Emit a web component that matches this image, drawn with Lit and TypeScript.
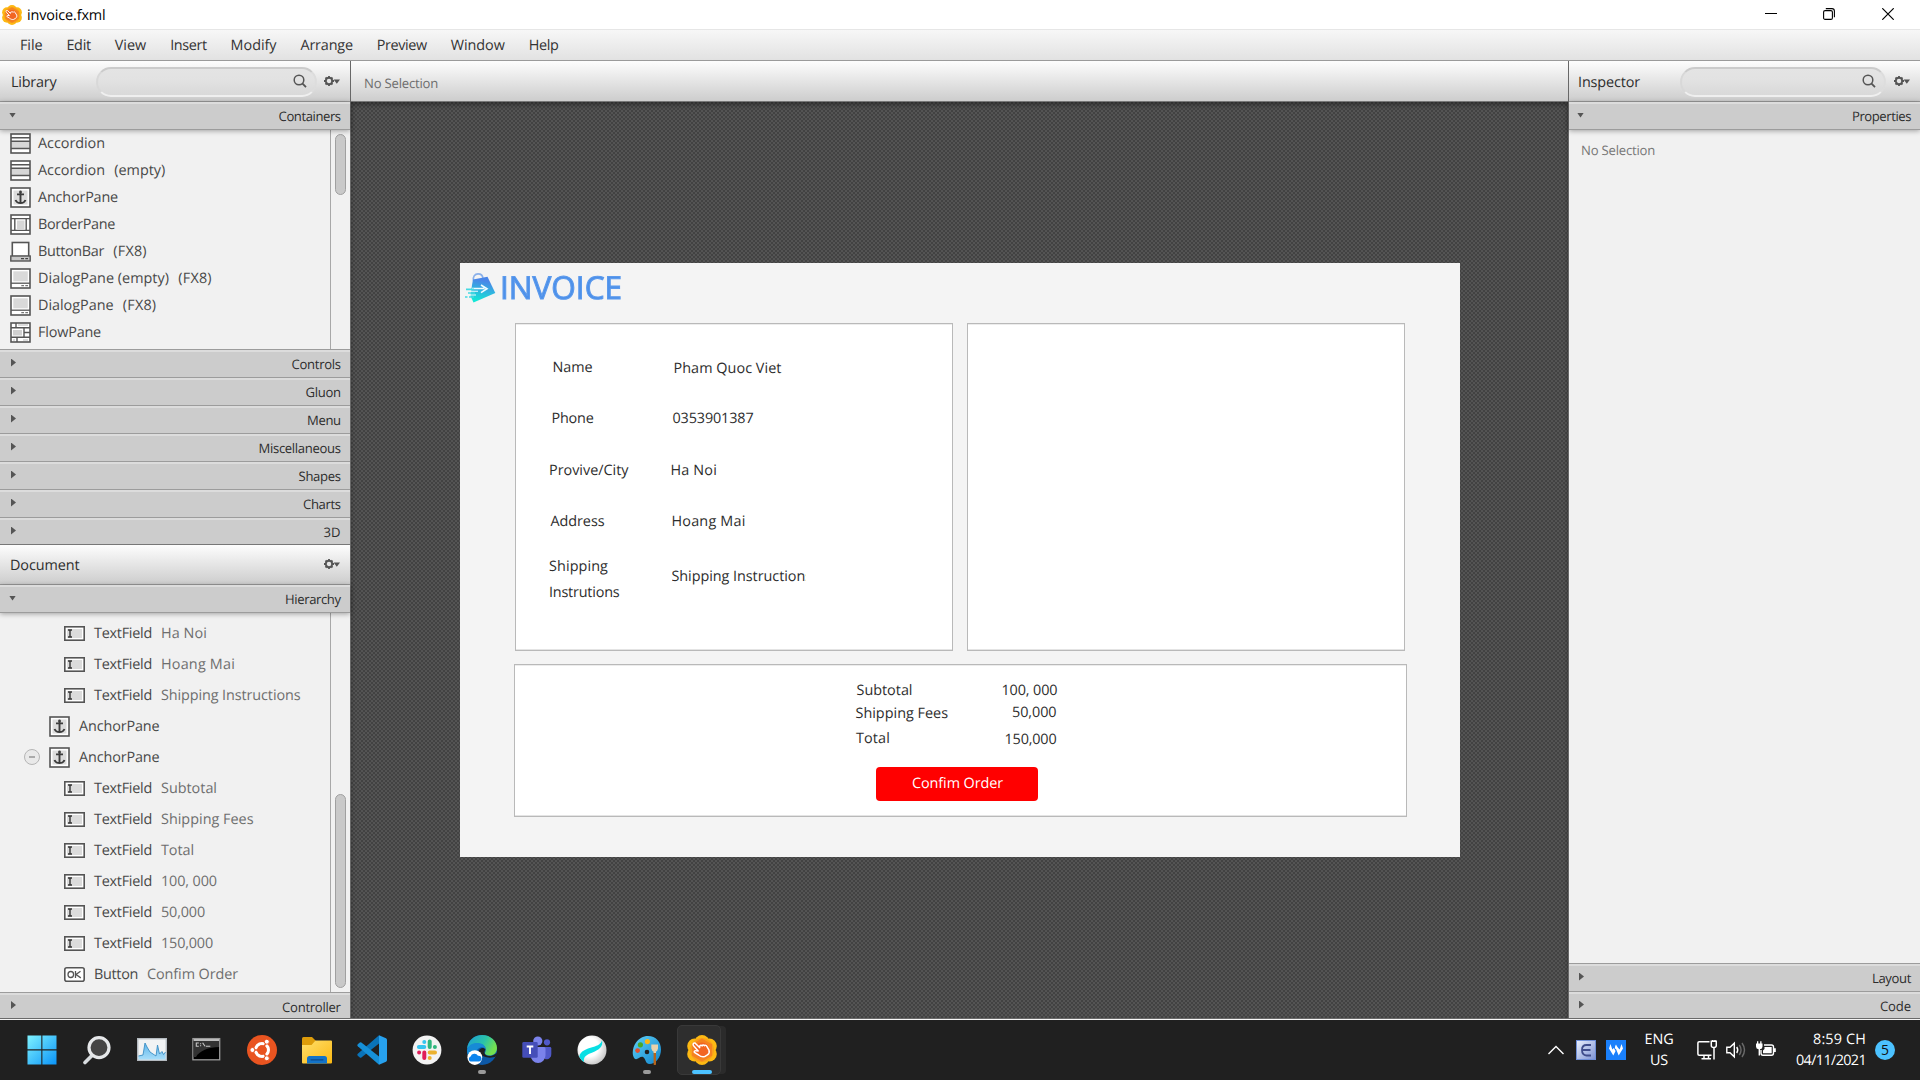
import { LitElement, html, svg, css, nothing } from "lit";
import { customElement, property } from "lit/decorators.js";

/** One line of text whose tracking is adjusted so that it spans a given width. */
@customElement("fit-text")
class FitText extends LitElement {
  @property() text = "";
  @property({ type: Number }) w = 0;
  static styles = css`
    :host { display: inline-block; flex: none; white-space: pre; }
    .t { display: inline-block; text-rendering: geometricPrecision; }
  `;
  updated() {
    const el = this.renderRoot.querySelector(".t") as HTMLElement;
    el.style.letterSpacing = "0px";
    const natural = el.getBoundingClientRect().width;
    if (this.w && this.text.length)
      el.style.letterSpacing = `${(this.w - natural) / this.text.length}px`;
  }
  render() {
    return html`<span class="t">${this.text}</span>`;
  }
}

const t = (text: string, w: number, cls = "") =>
  html`<fit-text class=${cls} .text=${text} .w=${w}></fit-text>`;

/* ---------- component glyphs (21 x 21) ---------- */
const frame = svg`<rect x="1" y="1" width="19" height="19" fill="#fff" stroke="#555" stroke-width="1.6"/>`;
const glyphs: Record<string, unknown> = {
  accordion: svg`${frame}<rect x="2" y="8.5" width="17" height="6.5" fill="#d6d6d6"/>
    <path d="M1 4.7H20M1 8.3H20M1 15.6H20" stroke="#555" stroke-width="1.5"/>`,
  anchor: svg`${frame}<rect x="3.5" y="3.5" width="14" height="14" fill="#dcdcdc"/>
    <path d="M10.5 4.5V16M7 7.4H14M5.5 13C6.3 15 8 16.1 10.5 16.1S14.7 15 15.5 13" fill="none" stroke="#3c3c3c" stroke-width="1.9"/>
    <circle cx="10.5" cy="4.9" r="1.3" fill="#3c3c3c"/>`,
  border: svg`${frame}<rect x="7" y="6.5" width="7.5" height="8.5" fill="#d6d6d6"/>
    <path d="M1 4.6H20M1 16.4H20M4.8 4.6V16.4M16.2 4.6V16.4" stroke="#555" stroke-width="1.4"/>`,
  buttonbar: svg`<rect x="2.3" y="1.5" width="16.4" height="14" fill="#fff" stroke="#555" stroke-width="1.6"/>
    <rect x=".8" y="15" width="19.4" height="5" fill="#c6c6c6" stroke="#555" stroke-width="1.4"/>
    <path d="M11 17.6H14M15.3 17.6H18" stroke="#444" stroke-width="1.4"/>`,
  dialog: svg`${frame}<rect x="3.3" y="3.3" width="14.5" height="10" fill="#d9d9d9"/>
    <path d="M1 15.2H20" stroke="#555" stroke-width="1.3"/><path d="M11.3 17.7H14M15.3 17.7H18" stroke="#777" stroke-width="1.2"/>`,
  flow: svg`${frame}<rect x="3" y="8" width="9" height="5.5" fill="#d0d0d0"/><path d="M8 3H18M3 18H5M13 18H18" stroke="#d0d0d0" stroke-width="1.5"/>
    <path d="M1 5.8H20M1 15.2H20M6 1V5.8M14 5.8V15.2M14 10.5H20M7 15.2V20" stroke="#555" stroke-width="1.4" fill="none"/>`,
  textfield: svg`<rect x=".8" y="3.8" width="19.4" height="13.4" fill="#fff" stroke="#555" stroke-width="1.6"/>
    <rect x="3" y="6" width="15" height="9" fill="#dcdcdc"/>
    <path d="M4 7H8M4 14H8M6 7V14" stroke="#333" stroke-width="1.4"/>`,
  ok: svg`<rect x=".8" y="3.8" width="19.4" height="13.4" rx="2" fill="#fff" stroke="#555" stroke-width="1.6"/>
    <ellipse cx="6.8" cy="10.5" rx="2.8" ry="3" fill="none" stroke="#555" stroke-width="1.3"/>
    <path d="M11.5 7V14M16.5 7.2L12 10.5L16.8 13.9" fill="none" stroke="#555" stroke-width="1.3"/>`,
};
const glyph = (name: string) =>
  html`<svg class="glyph" width="21" height="21" viewBox="0 0 21 21">${glyphs[name]}</svg>`;

const gear = html`<svg class="gear" width="17" height="12" viewBox="0 0 17 12">
  <circle cx="5" cy="6" r="3.2" fill="none" stroke="#555" stroke-width="1.9"/>
  <path d="M5 .9V2.4M5 9.6V11.1M0 6H1.5M8.5 6H10M1.5 2.5L2.5 3.5M7.5 8.5L8.5 9.5M8.5 2.5L7.5 3.5M2.5 8.5L1.5 9.5" stroke="#555" stroke-width="1.8"/>
  <path d="M9.6 4.6H16L12.8 8.7Z" fill="#555"/></svg>`;
const magnifier = html`<svg width="14" height="14" viewBox="0 0 14 14"><circle cx="6" cy="6" r="4.8" fill="none" stroke="#555" stroke-width="1.5"/><path d="M9.3 9.4L13 13.2" stroke="#555" stroke-width="1.8"/></svg>`;

/* Flower badge of the application, used in the title bar and the taskbar. */
const builder = (s: number) => html`<svg width=${s} height=${s} viewBox="0 0 30 30">
  <g fill="#fdb913"><circle cx="15" cy="7.5" r="7.5"/><circle cx="15" cy="22.5" r="7.5"/><circle cx="7.7" cy="11" r="7.5"/><circle cx="22.3" cy="11" r="7.5"/><circle cx="7.7" cy="19" r="7.5"/><circle cx="22.3" cy="19" r="7.5"/></g>
  <circle cx="15" cy="15" r="12" fill="#f9a11b"/><path d="M15 3.5L25 9.2V20.8L15 26.5L5 20.8V9.2Z" fill="#f58220"/><circle cx="15" cy="15" r="7.5" fill="#f26522"/>
  <path d="M6.3 8.6C7 7.8 8.2 8 9 8.9L12.6 12.6L12.8 10.9C13.4 9.9 14.6 10 15.1 10.9C15.6 9.7 17 9.8 17.4 10.8C18.3 9.9 19.5 10.3 19.8 11.4L22 15.2C22.6 17 22 18.8 20.4 19.9L17.6 21.6C15.6 22.2 13.2 21.4 11.6 20L7.4 17.4C6.9 16.3 7.8 15.5 9 15.7L11.2 16L6.6 10.8C6 10 5.9 9.2 6.3 8.6Z" fill="#f26522" stroke="#fff" stroke-width="1.5" stroke-linejoin="round"/></svg>`;

/* ---------- taskbar icons (30 x 30) ---------- */
const apps = [
  { art: svg`<defs><linearGradient id="win" x1="0" y1="0" x2="1" y2="1"><stop offset="0" stop-color="#7ff3ff"/><stop offset="1" stop-color="#0a93f8"/></linearGradient></defs>
    <path d="M.5 .5H14.3V14.3H.5ZM15.4 .5H29.5V14.3H15.4ZM.5 15.4H14.3V29.5H.5ZM15.4 15.4H29.5V29.5H15.4Z" fill="url(#win)"/>` },
  { art: svg`<path d="M3 27.5L10 20.5" stroke="#d9dde0" stroke-width="3.6" stroke-linecap="round"/><circle cx="17" cy="12.6" r="10" fill="#454545" stroke="#e6e8ea" stroke-width="3.2"/>` },
  { art: svg`<defs><linearGradient id="mon" x1="0" y1="0" x2="0" y2="1"><stop offset="0" stop-color="#5db4ea"/><stop offset="1" stop-color="#a8defa"/></linearGradient></defs>
    <rect x=".7" y="3.7" width="28.6" height="21.6" fill="#f1f3f4" stroke="#b4bac0" stroke-width="1.4"/>
    <path d="M1.5 21L6 20L8 8L10 12L13 17L16 19L19 21L20.5 10L22.5 19L25 16.5L26.5 19.5L28.5 17V24.6H1.5Z" fill="url(#mon)"/><path d="M1.5 21L6 20L8 8L10 12L13 17L16 19L19 21L20.5 10L22.5 19L25 16.5L26.5 19.5L28.5 17" fill="none" stroke="#3c8fc4" stroke-width=".9"/>` },
  { art: svg`<rect x=".9" y="3.6" width="26.8" height="21.2" fill="#000" stroke="#9a9a9a" stroke-width="1.3"/><path d="M1.6 5H27V12C17 12 7 16 4 22H1.6Z" fill="#333"/><path d="M1.6 5H27" stroke="#ccc" stroke-width="1.8"/>
    <path d="M6.8 8H4.3V11.3H6.8M8.6 8.2V9.2M8.6 10.2V11.3M10.6 7.7L13 11.3M13.8 11.3H18.3" stroke="#c8c8c8" stroke-width="1.1" fill="none"/>` },
  { art: svg`<circle cx="15" cy="15" r="15" fill="#e95420"/><circle cx="15" cy="15" r="6.4" fill="none" stroke="#fff" stroke-width="3.2"/>
    <path d="M15 15L3 15M15 15L21 4.6M15 15L21 25.4" stroke="#e95420" stroke-width="1.5"/><circle cx="15" cy="15" r="4.7" fill="#e95420"/>
    <g fill="#fff" stroke="#e95420" stroke-width="1"><circle cx="5.4" cy="15" r="2.5"/><circle cx="19.8" cy="6.7" r="2.5"/><circle cx="19.8" cy="23.3" r="2.5"/></g>` },
  { art: svg`<defs><linearGradient id="fol" x1="0" y1="0" x2="1" y2="1"><stop offset="0" stop-color="#ffdf6b"/><stop offset="1" stop-color="#fcb913"/></linearGradient></defs>
    <path d="M0 3.5Q0 2 1.5 2H10L13.5 5.5V12H0Z" fill="#dd9c0a"/><path d="M0 10H9.5L13.5 5.5H29Q30 5.5 30 6.5V27.5Q30 28.5 29 28.5H1Q0 28.5 0 27.5Z" fill="url(#fol)"/>
    <path d="M5 28.5V23.5Q5 21 7.5 21H22.5Q25 21 25 23.5V28.5Z" fill="#1373c8"/><path d="M9 24.8H21" stroke="#0c4a8c" stroke-width="1.2" stroke-linecap="round"/>` },
  { art: svg`<path d="M22 .3L.8 18.8Q-.2 19.8 .8 20.8L2.8 22.4Q3.6 23 4.4 22.4L22 8.6Z" fill="#0a73b8"/><path d="M22 29.7L.8 11.2Q-.2 10.2 .8 9.2L2.8 7.6Q3.6 7 4.4 7.6L22 21.4Z" fill="#1690d8"/><path d="M22 .3L29 3.3Q30 3.8 30 5V25Q30 26.2 29 26.7L22 29.7Z" fill="#27a1ee"/>` },
  { art: svg`<circle cx="15" cy="15" r="14.4" fill="#f3f3f3"/>
    <g stroke-width="4" stroke-linecap="round"><path d="M12.3 7V7.01M6.9 12H12.3" stroke="#36c5f0"/><path d="M17.7 6.5V12M22.9 12V12.01" stroke="#2eb67d"/><path d="M17.7 17.5H23M17.7 22.9V22.91" stroke="#ecb22e"/><path d="M12.3 17.5V23M7.1 17.6V17.61" stroke="#e01e5a"/></g>` },
  { run: true, art: svg`<defs><linearGradient id="edg" x1="0" y1="0" x2="1" y2=".4"><stop offset="0" stop-color="#1c9bd8"/><stop offset=".6" stop-color="#2bc3a8"/><stop offset="1" stop-color="#74e050"/></linearGradient></defs>
    <circle cx="15" cy="15" r="15" fill="#0d58a6"/><path d="M0 14C1 5 7.5 0 15 0C24 0 30 6.5 30 13C30 18 26.5 20.5 22.5 20.5C19 20.5 17.5 19 18 17.8C20.5 13 17 9 11.5 9C6 9 1.5 11.5 0 14Z" fill="url(#edg)"/>
    <path d="M0 15C1.5 9.5 6 7.5 11.5 8C16 8.5 18.5 11 18.7 14C17 11.5 12 11 9.5 16C8 19 8 22 9 25L4 25C1 22 0 19 0 15Z" fill="#178ad6"/>
    <path d="M18.4 14.5C17.4 16 16.8 18 18.2 19.5C21 22 26 21.5 30.5 17.5L29 21.2C24 24 15 23 11.5 16.5C12.5 13 16.5 11.5 18.4 14.5Z" fill="#202020"/>
    <circle cx="7.8" cy="22.6" r="7.4" fill="#fff"/><path d="M3.5 26.5A2.6 2.6 0 0 1 3.6 21.6A4.1 4.1 0 0 1 11 20.7A2.9 2.9 0 0 1 12 26.5Z" fill="#0a84ee"/>` },
  { art: svg`<circle cx="15.8" cy="6" r="4.6" fill="#7b83eb"/><circle cx="25" cy="7.3" r="3.1" fill="#5059c9"/><path d="M20 12H28Q29.3 12 29.3 13.3V19C29.3 23 26 25 23 24Z" fill="#5059c9"/><path d="M9 12H22Q23.5 12 23.5 13.5V20.5A7.4 7.4 0 0 1 8.6 20.5Z" fill="#7b83eb"/>
    <rect x=".3" y="7" width="15.4" height="15.8" rx="1.4" fill="#454eb8"/><path d="M4.7 11.5H11.3M8 11.5V19" stroke="#fff" stroke-width="1.9"/>` },
  { art: svg`<defs><radialGradient id="orb" cx=".4" cy=".4" r=".65"><stop offset=".5" stop-color="#fff"/><stop offset="1" stop-color="#c4c4c4"/></radialGradient></defs>
    <circle cx="15" cy="15" r="14.5" fill="url(#orb)"/><path d="M25 5.3C24 9 21 10.5 16 12C9 14 3.5 16 2.3 21.5C3.6 24.5 5.5 26.3 7 27C6 21.5 10 19.5 15.5 17.5C22 15 26.5 11.5 25 5.3Z" fill="#08dfe4"/>` },
  { run: true, art: svg`<defs><linearGradient id="pal" x1="0" y1="0" x2="1" y2="1"><stop offset="0" stop-color="#5fd0f5"/><stop offset="1" stop-color="#1286cf"/></linearGradient></defs>
    <path d="M16 1C24 1 29 7 29 14.5C29 22 24 29 17.5 29C13 29 14 23.5 11 22C8 20.8 5 26 2.5 23.5C-.5 20 .5 12 4 7.5C7 3.5 11 1 16 1Z" fill="url(#pal)"/><circle cx="15" cy="17" r="2.3" fill="#202020"/>
    <circle cx="8.4" cy="9.8" r="2.6" fill="#48a829"/><circle cx="15.4" cy="6.6" r="2.6" fill="#fbb615"/><circle cx="5.6" cy="15.6" r="2.4" fill="#e2502c"/>
    <path d="M21.6 17H24V29.5Q22.8 30.5 21.6 29.5Z" fill="#b5651d"/><path d="M19.3 9.5H26V13.5Q25.5 16 24 16.5V18H21.5V16.5Q20 16 19.3 13.5Z" fill="#e8d2ac"/>` },
  { active: true, art: nothing },
];

type Label = { s: string; x: number; base: number; w: number; clip?: boolean };
const details: Label[] = [
  { s: "Name", x: 36.5, base: 48, w: 40 }, { s: "Pham Quoc Viet", x: 157.5, base: 49, w: 108 },
  { s: "Phone", x: 35.5, base: 99, w: 42 }, { s: "0353901387", x: 156.5, base: 99, w: 81 },
  { s: "Provive/City", x: 33, base: 151, w: 79.5 }, { s: "Ha Noi", x: 154.5, base: 151, w: 46.5 },
  { s: "Address", x: 34.5, base: 202, w: 54 }, { s: "Hoang Mai", x: 155.5, base: 202, w: 74 },
  { s: "Shipping", x: 33, base: 247, w: 59 }, { s: "Instrutions", x: 33, base: 273, w: 70.5 },
  { s: "Shipping Instructions", x: 155.5, base: 257, w: 140.5, clip: true },
];
const totals: Label[] = [
  { s: "Subtotal", x: 341.5, base: 30, w: 56 }, { s: "100, 000", x: 486.5, base: 30, w: 56 },
  { s: "Shipping Fees", x: 340.5, base: 53, w: 92.5 }, { s: "50,000", x: 497, base: 52, w: 44.5 },
  { s: "Total", x: 341, base: 78, w: 34 }, { s: "150,000", x: 489.5, base: 79, w: 52 },
];

@customElement("app-root")
class AppRoot extends LitElement {
  static styles = css`
    :host { display: block; width: 1920px; height: 1080px; overflow: hidden; font: 14.4px/20px "Open Sans", "Noto Sans", sans-serif; color: #2d2d2d; }
    * { box-sizing: border-box; }
    svg { display: block; flex: none; }
    .screen { height: 1080px; display: flex; flex-direction: column; background: #202020; }
    .titlebar { height: 29px; background: #fff; display: flex; align-items: center; padding-left: 2px; gap: 5px; color: #000; flex: none; }
    .titlebar fit-text { padding-top: 1px; }
    .wincontrols { margin-left: auto; display: flex; gap: 46.7px; padding: 0 26px 2px 0; }
    .menubar { height: 32px; flex: none; display: flex; align-items: center; gap: 23.9px; padding: 1px 0 0 20px; border-top: 1px solid #e6e6e6; border-bottom: 1px solid #9a9a9a; background: linear-gradient(#f7f7f7, #e2e2e2); color: #333; }
    .body { height: 958px; flex: none; display: flex; border-bottom: 1px solid #6a6a6a; }
    .edge { height: 1px; background: #f4f4f4; flex: none; }
    .side { display: flex; flex-direction: column; background: #f1f1f1; flex: none; }
    .left { width: 351px; border-right: 1px solid #686868; }
    .right { width: 352px; border-left: 1px solid #686868; }
    .center { flex: 1; display: flex; flex-direction: column; min-width: 0; }
    .head { height: 41px; flex: none; display: flex; align-items: center; background: linear-gradient(#fdfdfd, #cdcdcd); border-bottom: 1px solid #999; padding: 2px 9px 0 11px; }
    .head.doc { height: 41px; border-top: 1px solid #777; padding-top: 1px; padding-left: 10px; }
    .right .head { padding-left: 9px; padding-right: 8px; }
    .center .head { padding-left: 13px; padding-top: 4px; border-bottom-color: #777; }
    .small { font-size: 13.1px; }
    .muted { color: #6e6e6e; }
    .search { height: 30px; margin-left: auto; border-radius: 15px; border: 2px solid; border-color: #cbcbcb #dddddd #efefef #d8d8d8; background: linear-gradient(#e4e4e4, #e2e2e2 40%, #d9d9d9); display: flex; align-items: center; justify-content: flex-end; padding: 0 8px 2px 0; width: 221px; margin-right: 7px; margin-top: -1px; }
    .right .search { width: 206px; margin-right: 8px; }
    .right .head .gear { margin-right: 1px; }
    .gear { margin-top: -2px; }
    .doc .gear { margin-left: auto; }
    .section { height: 28px; flex: none; display: flex; align-items: center; justify-content: space-between; padding: 0 9.4px 1px 11px; border-top: 2px solid #dcdcdc; background: #cccccc; border-bottom: 1px solid #9c9c9c; font-size: 13.1px; }
    .section.open { box-shadow: 0 1px 5px #0005; position: relative; padding-left: 9px; }
    .section.last { height: 26px; border-bottom: 0; padding-bottom: 0; }
    .section.last.foot { height: 25px; }
    .right .section { padding-right: 9px; padding-left: 10px; }
    .right .section.open { padding-left: 8px; }
    .tri { width: 5px; height: 8px; background: #555; clip-path: polygon(0 0, 100% 50%, 0 100%); margin-top: -3px; }
    .open .tri { width: 7px; height: 5px; clip-path: polygon(0 0, 100% 0, 50% 100%); margin-top: -2px; }
    .scroller { display: flex; flex: none; border-bottom: 1px solid #9c9c9c; color: #484848; }
    .scroller.lib { height: 220px; }
    .scroller.tree { flex: 1; }
    .items { width: 330px; flex: none; }
    .track { flex: 1; border-left: 1px solid #a8a8a8; padding: 4px 4px 4px 4px; display: flex; flex-direction: column; }
    .thumb { height: 61px; border-radius: 6px; background: #c9c9c9; border: 1px solid #a0a0a0; }
    .tree .track { justify-content: flex-end; }
    .tree .thumb { height: 194px; }
    .item { height: 27px; display: flex; align-items: center; padding-left: 10px; gap: 9.3px; }
    .item .glyph { margin-right: -2.3px; }
    .items.nodes { padding-top: 5px; }
    .node { height: 31px; display: flex; align-items: center; gap: 9px; padding-left: 49px; }
    .node.leaf { padding-left: 64px; }
    .node.expanded { padding-left: 24px; }
    .minus { width: 16px; height: 16px; border: 1.5px solid #b5b5b5; border-radius: 50%; display: grid; place-items: center; background: #e9e9e9; margin-top: -2px; }
    .minus::after { content: ""; width: 6px; height: 2px; background: #aaa; }
    .empty { flex: 1; padding: 10px 12px; color: #777; border-bottom: 1px solid #9c9c9c; }
    .stage { flex: 1; padding: 161px 109px 0 109px; background-color: #545454; background-image: radial-gradient(circle at 1px 1px, #424242 0.8px, transparent 1.4px), radial-gradient(circle at 3px 3px, #424242 0.8px, transparent 1.4px); background-size: 4px 4px; box-shadow: inset 0 3px 4px #0005; }
    .form { width: 1000px; height: 594px; background: #f4f4f4; padding: 10px 53px 0 54px; }
    .brand { display: flex; height: 50px; margin-left: -50.5px; gap: 4.5px; color: #4c90ea; font-size: 31.5px; line-height: 28px; -webkit-text-stroke: 1.1px #5c9aec; filter: blur(0.5px); }
    .panes { display: grid; grid-template-columns: 438px 438px; gap: 14px; padding-left: 1px; margin-bottom: 13px; }
    .pane { height: 328px; background: #fff; border: 1px solid #b9b9b9; position: relative; box-shadow: inset 0 1px #ececec, inset 0 -1px #e4e4e4; }
    .pane.total { height: 153px; width: 893px; }
    .label { position: absolute; height: 20px; white-space: nowrap; }
    .label.clip { width: 134px; overflow: hidden; }
    .confirm { position: absolute; left: 361px; top: 102px; width: 162px; height: 34px; border: 0; border-radius: 4px; background: #f00; color: #fff; font: inherit; display: flex; justify-content: center; align-items: center; padding: 0 0 2px 1px; }
    .taskbar { height: 60px; display: flex; align-items: center; padding: 0 25px 0 14px; color: #fff; }
    .app { width: 55px; height: 50px; display: grid; place-items: center; position: relative; }
    .app.active { width: 44px; margin-left: 3px; padding-left: 6px; background: #2e2e2e; border: 1px solid #393939; border-radius: 5px; box-shadow: 6px 0 0 -1px #2b2b2b; }
    .bar { position: absolute; bottom: 1px; left: 24px; width: 8px; height: 4px; border-radius: 2px; background: #9a9a9a; }
    .active .bar { left: 14px; width: 20px; bottom: 0; background: #4cc2ff; }
    .tray { margin-left: auto; display: flex; align-items: center; }
    .stack { display: flex; flex-direction: column; align-items: center; }
    .clock { align-items: flex-end; width: 90px; margin-right: 9px; }
    .badge { width: 20px; height: 20px; border-radius: 50%; background: #4cc2ff; color: #111; display: grid; place-items: center; font-size: 14px; }
    .e { margin-left: 12px; } .v { margin-left: 10px; } .lang { width: 66px; } .net { margin-left: 5px; } .snd { margin-left: 9px; } .bat { margin-left: 10px; }
  `;

  section(name: string, w: number, cls = "") {
    return html`<div class="section ${cls}"><span class="tri"></span>${t(name, w)}</div>`;
  }
  label(l: Label) {
    return html`<div class="label ${l.clip ? "clip" : ""}" style="left:${l.x}px;top:${l.base - 15}px">${t(l.s, l.w)}</div>`;
  }
  leaf(name: string, w: number, icon = "textfield", type = "TextField", tw = 58) {
    return html`<div class="node leaf">${glyph(icon)}${t(type, tw)}${t(name, w, "muted")}</div>`;
  }

  render() {
    const menu: [string, number][] = [["File", 22.5], ["Edit", 24.5], ["View", 31.5], ["Insert", 36.5], ["Modify", 46], ["Arrange", 52.5], ["Preview", 50], ["Window", 54], ["Help", 30]];
    const lib: [string, string, number, string, number][] = [
      ["accordion", "Accordion", 67, "", 0], ["accordion", "Accordion", 67, "(empty)", 51], ["anchor", "AnchorPane", 80, "", 0],
      ["border", "BorderPane", 77, "", 0], ["buttonbar", "ButtonBar", 66, "(FX8)", 33.5], ["dialog", "DialogPane (empty)", 131, "(FX8)", 33.5],
      ["dialog", "DialogPane", 75.5, "(FX8)", 33.5], ["flow", "FlowPane", 63, "", 0]];
    return html`<div class="screen">
      <div class="titlebar">${builder(20)}${t("invoice.fxml", 78.5)}
        <div class="wincontrols">
          <svg width="12" height="12" viewBox="0 0 12 12"><path d="M0 5.5H12" stroke="#000"/></svg>
          <svg width="12" height="12" viewBox="0 0 12 12" fill="none" stroke="#000" stroke-width="1.1"><rect x=".6" y="2.6" width="8.8" height="8.8" rx="1.5"/><path d="M2.8 .6H9Q11.4 .6 11.4 3V9.2"/></svg>
          <svg width="12" height="12" viewBox="0 0 12 12"><path d="M.3 .3L11.7 11.7M11.7 .3L.3 11.7" stroke="#000" stroke-width="1.2"/></svg>
        </div></div>
      <div class="menubar">${menu.map(([s, w]) => t(s, w))}</div>
      <div class="body">
        <div class="side left">
          <div class="head">${t("Library", 45.5)}<div class="search">${magnifier}</div>${gear}</div>
          ${this.section("Containers", 62, "open")}
          <div class="scroller lib"><div class="items">
            ${lib.map(([i, a, aw, b, bw]) => html`<div class="item">${glyph(i)}${t(a, aw)}${b ? t(b, bw) : nothing}</div>`)}
          </div><div class="track"><div class="thumb"></div></div></div>
          ${this.section("Controls", 49)}${this.section("Gluon", 35)}${this.section("Menu", 33.5)}${this.section("Miscellaneous", 82)}
          ${this.section("Shapes", 42)}${this.section("Charts", 37.5)}${this.section("3D", 17, "last")}
          <div class="head doc">${t("Document", 69.5)}${gear}</div>
          ${this.section("Hierarchy", 55.5, "open")}
          <div class="scroller tree"><div class="items nodes">
            ${this.leaf("Ha Noi", 46)}${this.leaf("Hoang Mai", 74)}${this.leaf("Shipping Instructions", 139.5)}
            <div class="node">${glyph("anchor")}${t("AnchorPane", 80.5)}</div>
            <div class="node expanded"><span class="minus"></span>${glyph("anchor")}${t("AnchorPane", 80.5)}</div>
            ${this.leaf("Subtotal", 56)}${this.leaf("Shipping Fees", 92.5)}${this.leaf("Total", 33)}
            ${this.leaf("100, 000", 56)}${this.leaf("50,000", 44)}${this.leaf("150,000", 52)}
            ${this.leaf("Confim Order", 91, "ok", "Button", 44)}
          </div><div class="track"><div class="thumb"></div></div></div>
          ${this.section("Controller", 58.5, "last foot")}
        </div>
        <div class="center">
          <div class="head small muted">${t("No Selection", 74)}</div>
          <div class="stage"><div class="form">
            <div class="brand">
              <svg width="32" height="30" viewBox="0 0 32 30"><defs><linearGradient id="bag" x1=".3" y1="0" x2=".1" y2="1"><stop offset=".1" stop-color="#4a86e8"/><stop offset=".9" stop-color="#13e6d6"/></linearGradient></defs>
                <path d="M9.5 8C8.5 3.5 11 .9 14 .9S18.8 3 19 5.5" fill="none" stroke="#8ab0ea" stroke-width="1.6"/>
                <path d="M9 6.5L23.5 3.8L31.3 20L9.5 29.5L6.5 23L8 12Z" fill="url(#bag)"/>
                <path d="M8 15.5H20.5M17 12L23 15.7L17 19.7" fill="none" stroke="#effcff" stroke-width="1.6"/>
                <path d="M2 16.4H10M4 20H11M1 24H3.5M5 24H10" stroke="#45d9e2" stroke-width="1.6"/><path d="M7 18.2H14M6 22H12" stroke="#effcff" stroke-width="1.1"/></svg>
              ${t("INVOICE", 122)}</div>
            <div class="panes"><div class="pane">${details.map((l) => this.label(l))}</div><div class="pane"></div></div>
            <div class="pane total">${totals.map((l) => this.label(l))}<button class="confirm">${t("Confim Order", 91)}</button></div>
          </div></div>
        </div>
        <div class="side right">
          <div class="head">${t("Inspector", 62)}<div class="search">${magnifier}</div>${gear}</div>
          ${this.section("Properties", 59, "open")}
          <div class="empty small">${t("No Selection", 74)}</div>
          ${this.section("Layout", 39)}${this.section("Code", 31, "last")}
        </div>
      </div>
      <div class="edge"></div>
      <div class="taskbar">
        ${apps.map((a: any) => html`<div class="app ${a.active ? "active" : ""}">
          ${a.active ? builder(30) : html`<svg width="30" height="30" viewBox="0 0 30 30">${a.art}</svg>`}
          ${a.run || a.active ? html`<span class="bar"></span>` : nothing}</div>`)}
        <div class="tray">
          <svg width="16" height="10" viewBox="0 0 16 10"><path d="M.5 9L8 1.5L15.5 9" fill="none" stroke="#fff" stroke-width="1.4"/></svg>
          <svg class="e" width="20" height="20" viewBox="0 0 20 20"><defs><linearGradient id="ev" x1="0" y1="0" x2="1" y2="1"><stop offset="0" stop-color="#e8eefc"/><stop offset="1" stop-color="#7f95d6"/></linearGradient></defs><rect width="20" height="20" fill="#6f8fd8"/><rect x="1" y="1" width="18" height="18" fill="url(#ev)"/><path d="M15 5H10.5Q6 5 6 10T10.5 15.5H15M6 10H14.5" fill="none" stroke="#3f4d8c" stroke-width="1.8"/></svg>
          <svg class="v" width="20" height="20" viewBox="0 0 20 20"><rect width="20" height="20" fill="#1a80fb"/><path d="M4.5 4L6.3 9.5L7.8 8L9.6 11L7.3 15.5L3 8.5ZM9.2 6L10 4.5L10.8 6L12.2 8L13.7 9.5L15.5 4L17 8.5L12.7 15.5L10 9L8.8 8.5Z" fill="#fff"/></svg>
          <div class="stack lang">${t("ENG", 29)}${t("US", 18)}</div>
          <svg class="net" width="20" height="20" viewBox="0 0 20 20" fill="none" stroke="#fff" stroke-width="1.5"><path d="M12.5 1.7H2.2Q.9 1.7 .9 3V14Q.9 15.2 2.2 15.2H14.5M4.5 18.8H14M7 15.2V18.8M11.5 15.2V18.8M17 7.5V19.5"/><path d="M14.3 1.3H19.3V5.5Q19.3 7.5 16.8 7.5T14.3 5.5Z"/><path d="M15.7 0V2M18 0V2"/></svg>
          <svg class="snd" width="20" height="20" viewBox="0 0 20 20" fill="none" stroke="#fff" stroke-width="1.4"><path d="M.8 7.2H4L8.3 3.2V16.8L4 12.8H.8Z"/><path d="M10.7 7Q12.8 10 10.7 13"/><path d="M13.3 5Q16.8 10 13.3 15M16 3Q21 10 16 17" stroke="#6a6a6a"/></svg>
          <svg class="bat" width="20" height="20" viewBox="0 0 20 20"><path d="M8 5H15.5Q17.5 5 17.5 7V13Q17.5 15.2 15.5 15.2H7Q5 15.2 5 13V10" fill="none" stroke="#fff" stroke-width="1.4"/><path d="M8.5 7H15.7V13.3H7V10.5L8.5 9ZM18 8.2H19.8V12H18ZM0 3.5H6.5V6.5Q6.5 9 4 9.3V15.5H2.6V9.3Q0 9 0 6.5ZM1 1.2H2.3V4H1ZM4.2 1.2H5.5V4H4.2Z" fill="#fff"/></svg>
          <div class="stack clock">${t("8:59 CH", 53)}${t("04/11/2021", 70)}</div>
          <div class="badge">5</div>
        </div>
      </div>
    </div>`;
  }
}
